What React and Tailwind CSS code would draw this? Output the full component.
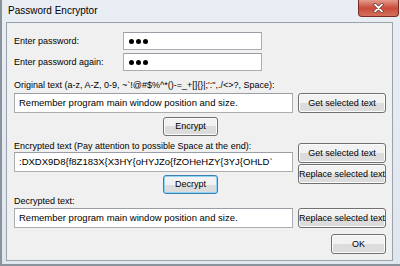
import React from 'react';

const font = { fontFamily: '"Liberation Sans", Arial, sans-serif' };

const Btn = ({ children, w = 'w-[88px]', h = 'h-[20px]', focus = false }) => (
  <div
    className={`${w} ${h} rounded-[3px] border ${
      focus ? 'border-[#3c7fb1] shadow-[inset_0_0_0_1px_#8fd3f5]' : 'border-[#707070] shadow-[inset_0_0_0_1px_#fcfcfc]'
    } bg-gradient-to-b from-[#f2f2f2] from-50% to-[#dcdcdc] to-50% flex items-center justify-center text-[9px] text-black leading-none whitespace-nowrap`}
  >
    {children}
  </div>
);

const Field = ({ children, w = 'w-[279px]', h = 'h-[20px]' }) => (
  <div
    className={`${w} ${h} border border-[#abadb3] border-t-[#9a9da3] bg-white flex items-center px-[4px] text-[9.5px] text-black leading-none whitespace-nowrap overflow-hidden`}
  >
    {children}
  </div>
);

const Dots = () => (
  <div className="flex gap-[2px] ml-[1px]">
    <span className="w-[5px] h-[5px] rounded-full bg-black" />
    <span className="w-[5px] h-[5px] rounded-full bg-black" />
    <span className="w-[5px] h-[5px] rounded-full bg-black" />
  </div>
);

const App = () => {
  return (
    <div
      className="w-[400px] h-[266px] bg-gradient-to-b from-[#e9eef4] to-[#dfe6ee] border-l-[2px] border-b-[2px] border-[#8a929c] flex flex-col overflow-hidden"
      style={font}
    >
      {/* title bar */}
      <div className="h-[22px] flex justify-between items-start">
        <div className="pl-[6px] pt-[6px] text-[10px] text-black leading-none">Password Encryptor</div>
        <div className="w-[41px] h-[17px] mr-[1px] rounded-b-[4px] border border-t-0 border-[#7a2b24] bg-gradient-to-b from-[#e29a8c] via-[#c94a3a] to-[#d2705c] flex items-center justify-center">
          <svg width="11" height="10" viewBox="0 0 11 10">
            <path d="M2 1.5 L9 8.5 M9 1.5 L2 8.5" stroke="#4a1a14" strokeWidth="3" strokeLinecap="round" />
            <path d="M2 1.5 L9 8.5 M9 1.5 L2 8.5" stroke="#ffffff" strokeWidth="1.8" strokeLinecap="round" />
          </svg>
        </div>
      </div>

      {/* client area */}
      <div className="ml-[4px] mr-[7px] h-[239px] border border-[#9aa3ad] bg-[#f0f0f0] flex flex-col pl-[7px] text-[9px] text-black leading-none whitespace-nowrap">
        <div className="mt-[9px] flex items-center">
          <div className="w-[109px]">Enter password:</div>
          <Field w="w-[139px]" h="h-[18px]"><Dots /></Field>
        </div>
        <div className="mt-[3px] flex items-center">
          <div className="w-[109px]">Enter password again:</div>
          <Field w="w-[139px]" h="h-[18px]"><Dots /></Field>
        </div>

        <div className="mt-[8px] h-[12px] flex items-center">
          Original text (a-z, A-Z, 0-9, ~`!@#$%^*()-=_+[]{'{}'}|;':",./&lt;&gt;?, Space):
        </div>
        <div className="mt-[2px] flex items-center gap-[5px]">
          <Field>Remember program main window position and size.</Field>
          <Btn>Get selected text</Btn>
        </div>
        <div className="mt-[4px] pl-[149px]">
          <Btn w="w-[55px]" h="h-[19px]">Encrypt</Btn>
        </div>

        <div className="mt-[4px] flex items-start gap-[5px]">
          <div className="flex flex-col">
            <div className="h-[12px] flex items-center">Encrypted text (Pay attention to possible Space at the end):</div>
            <Field>:DXDX9D8{'{'}f8Z183X{'{'}X3HY{'{'}oHYJZo{'{'}fZOHeHZY{'{'}3YJ{'{'}OHLD`</Field>
            <div className="mt-[3px] pl-[149px]">
              <Btn w="w-[55px]" h="h-[19px]" focus>Decrypt</Btn>
            </div>
          </div>
          <div className="pt-[3px] flex flex-col gap-[1px]">
            <Btn>Get selected text</Btn>
            <Btn>Replace selected text</Btn>
          </div>
        </div>

        <div className="mt-[1px] h-[12px] flex items-center">Decrypted text:</div>
        <div className="mt-[1px] flex items-center gap-[5px]">
          <Field>Remember program main window position and size.</Field>
          <Btn>Replace selected text</Btn>
        </div>
        <div className="mt-[6px] flex justify-end pr-[6px]">
          <Btn w="w-[55px]">OK</Btn>
        </div>
      </div>
    </div>
  );
};

export default App;
